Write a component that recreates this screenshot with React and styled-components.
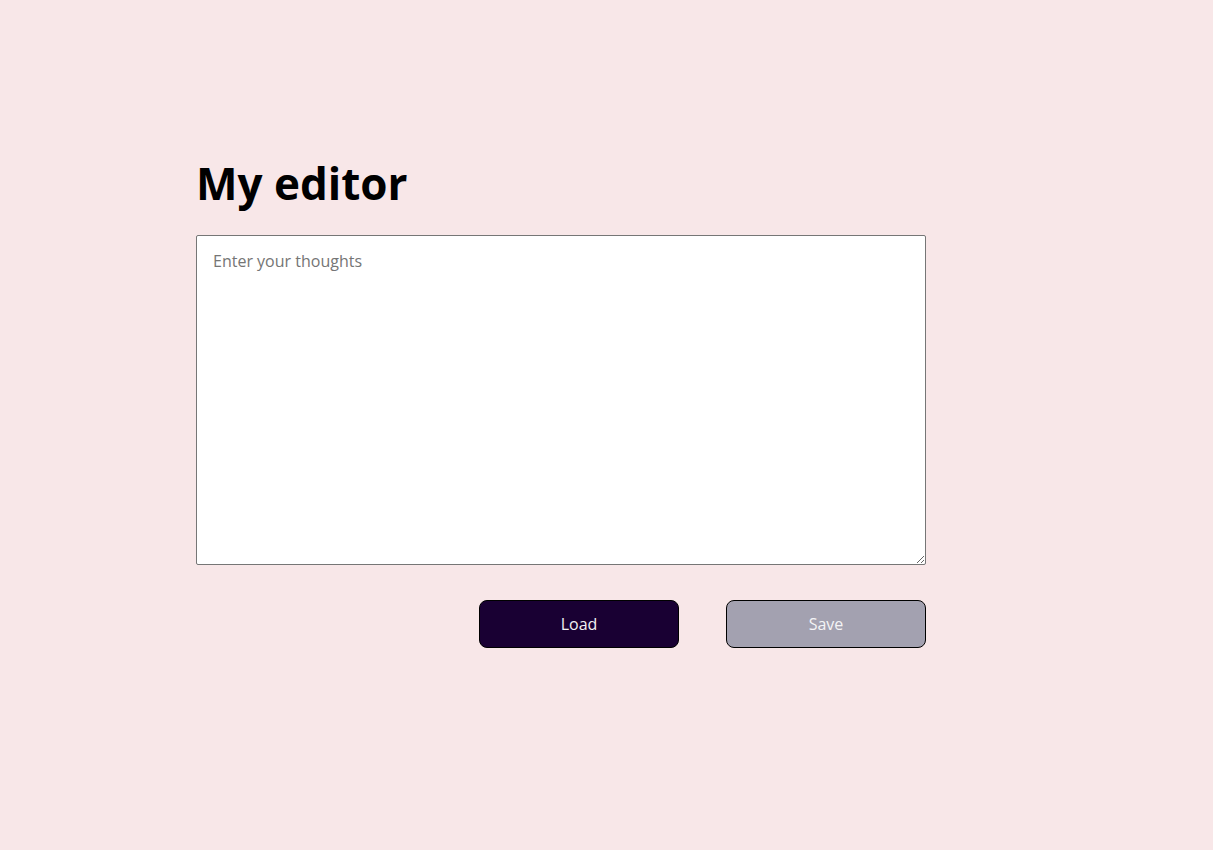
import React from 'react';
import styled, { createGlobalStyle } from 'styled-components';

const GlobalStyle = createGlobalStyle`
    html, body {
        margin: 0;
        padding: 0;
        background-color: #F8E7E8;
        font-family: "Open Sans", "Liberation Sans", sans-serif;
    }
`;

const Page = styled.div`
    min-height: 850px;
    padding: 141px 0 0 196px;
    box-sizing: border-box;
`;

const Editor = styled.div`
    width: 730px;
    display: flex;
    flex-direction: column;
`;

const Title = styled.h1`
    margin: 0 0 10px 0;
    font-size: 44px;
    font-weight: 700;
    line-height: 84px;
    color: #000000;
`;

const TextArea = styled.textarea`
    box-sizing: border-box;
    width: 730px;
    height: 330px;
    padding: 14px 16px;
    border: 1px solid #767676;
    border-radius: 2px;
    background: #FFFFFF;
    font-family: "Open Sans", "Liberation Sans", sans-serif;
    font-size: 16px;
    line-height: 22px;
    color: #222222;

    &::placeholder {
        color: #757575;
    }
`;

const Actions = styled.div`
    display: flex;
    justify-content: flex-end;
    gap: 47px;
    margin-top: 35px;
`;

const Button = styled.button`
    width: 200px;
    height: 48px;
    border: 1px solid #000000;
    border-radius: 8px;
    background-color: ${(p) => (p.$primary ? '#190033' : '#A3A1B0')};
    color: ${(p) => (p.$primary ? '#F2F2F2' : '#F4F4F6')};
    font-family: "Open Sans", "Liberation Sans", sans-serif;
    font-size: 16px;
    cursor: pointer;
`;

const App = () => {
    return (
        <Page>
            <GlobalStyle />
            <Editor>
                <Title>My editor</Title>
                <TextArea placeholder="Enter your thoughts" />
                <Actions>
                    <Button $primary>Load</Button>
                    <Button>Save</Button>
                </Actions>
            </Editor>
        </Page>
    );
};

export default App;
